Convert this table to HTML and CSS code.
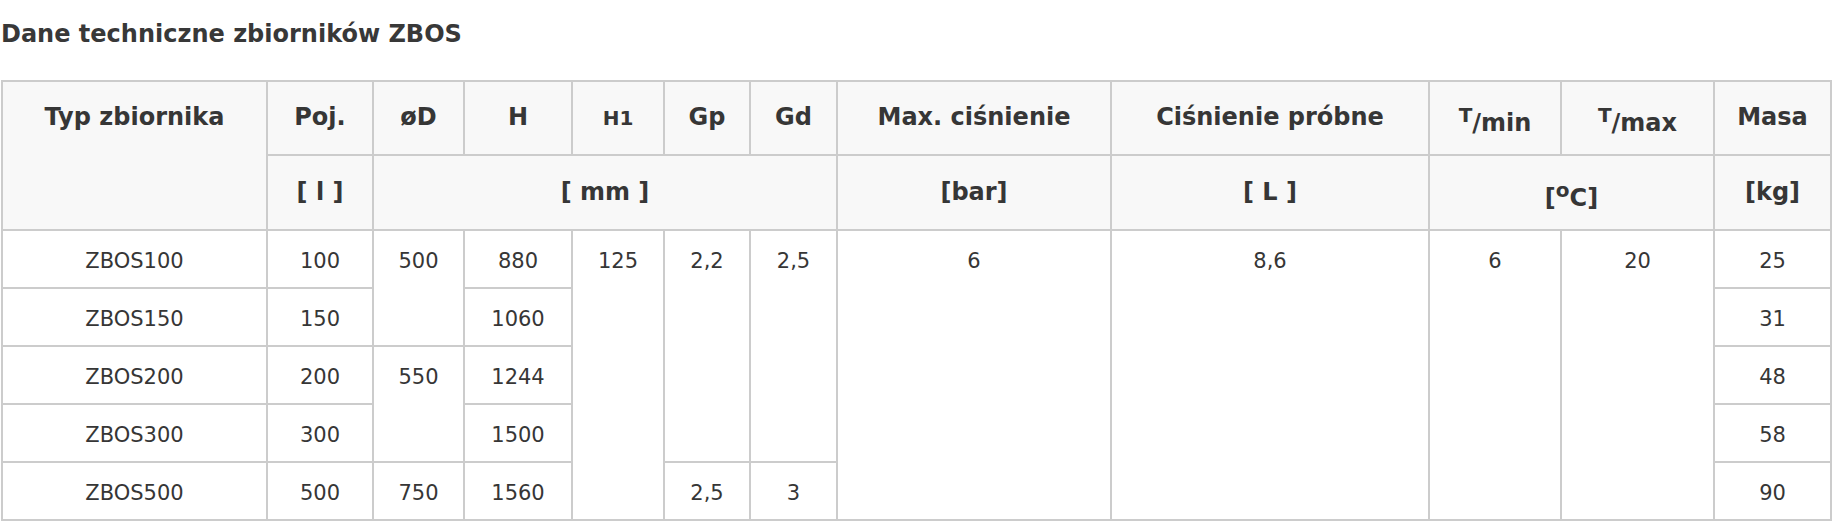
FILE: index.html
```html
<!DOCTYPE html>
<html lang="pl">
<head>
<meta charset="utf-8">
<title>Dane techniczne zbiorników ZBOS</title>
<link rel="stylesheet" href="styles.css">
</head>
<body>
<div class="page">
  <h2 class="title">Dane techniczne zbiorników ZBOS</h2>
  <table class="specs">
    <colgroup>
      <col class="c-typ">
      <col class="c-poj">
      <col class="c-d">
      <col class="c-h">
      <col class="c-h1">
      <col class="c-gp">
      <col class="c-gd">
      <col class="c-max">
      <col class="c-prob">
      <col class="c-tmin">
      <col class="c-tmax">
      <col class="c-masa">
    </colgroup>
    <thead>
      <tr class="head-names">
        <th rowspan="2">Typ zbiornika</th>
        <th>Poj.</th>
        <th>øD</th>
        <th>H</th>
        <th class="small-head">H1</th>
        <th>Gp</th>
        <th>Gd</th>
        <th>Max. ciśnienie</th>
        <th>Ciśnienie próbne</th>
        <th><sup class="t-sym">T</sup>/min</th>
        <th><sup class="t-sym">T</sup>/max</th>
        <th>Masa</th>
      </tr>
      <tr class="head-units">
        <th>[ l ]</th>
        <th colspan="5">[ mm ]</th>
        <th>[bar]</th>
        <th>[ L ]</th>
        <th colspan="2">[<sup class="deg">o</sup>C]</th>
        <th>[kg]</th>
      </tr>
    </thead>
    <tbody>
      <tr>
        <td>ZBOS100</td>
        <td>100</td>
        <td rowspan="2">500</td>
        <td>880</td>
        <td rowspan="5">125</td>
        <td rowspan="4">2,2</td>
        <td rowspan="4">2,5</td>
        <td rowspan="5">6</td>
        <td rowspan="5">8,6</td>
        <td rowspan="5">6</td>
        <td rowspan="5">20</td>
        <td>25</td>
      </tr>
      <tr>
        <td>ZBOS150</td>
        <td>150</td>
        <td>1060</td>
        <td>31</td>
      </tr>
      <tr>
        <td>ZBOS200</td>
        <td>200</td>
        <td rowspan="2">550</td>
        <td>1244</td>
        <td>48</td>
      </tr>
      <tr>
        <td>ZBOS300</td>
        <td>300</td>
        <td>1500</td>
        <td>58</td>
      </tr>
      <tr>
        <td>ZBOS500</td>
        <td>500</td>
        <td>750</td>
        <td>1560</td>
        <td>2,5</td>
        <td>3</td>
        <td>90</td>
      </tr>
    </tbody>
  </table>
</div>
</body>
</html>
```
FILE: styles.css
```css
body {
  margin: 0;
  background: #ffffff;
  color: #363636;
  font-family: "DejaVu Sans", Verdana, sans-serif;
}

.page {
  padding: 20px 0 0 1px;
}

.title {
  margin: 0 0 32px;
  font-size: 24px;
  font-weight: bold;
  line-height: normal;
  color: #383838;
}

.specs {
  border-collapse: collapse;
  table-layout: fixed;
  width: 1831px;
}

.c-typ { width: 265px; }
.c-poj { width: 106px; }
.c-d { width: 91px; }
.c-h { width: 108px; }
.c-h1 { width: 92px; }
.c-gp { width: 86px; }
.c-gd { width: 87px; }
.c-max { width: 274px; }
.c-prob { width: 318px; }
.c-tmin { width: 132px; }
.c-tmax { width: 153px; }
.c-masa { width: 117px; }

.specs th,
.specs td {
  border: 2px solid #cccccc;
  text-align: center;
  vertical-align: top;
}

.specs th {
  background: #f8f8f8;
  font-size: 24px;
  font-weight: bold;
  line-height: normal;
  padding: 21px 4px 17px;
}

.specs .head-units th {
  padding: 22px 4px 17px;
}

.specs th.small-head {
  font-size: 20px;
  padding-top: 24px;
}

.t-sym {
  font-size: 20px;
}

.deg {
  font-size: 20px;
}

.specs td {
  font-size: 21px;
  line-height: 24px;
  padding: 18px 4px 14px;
}
```
